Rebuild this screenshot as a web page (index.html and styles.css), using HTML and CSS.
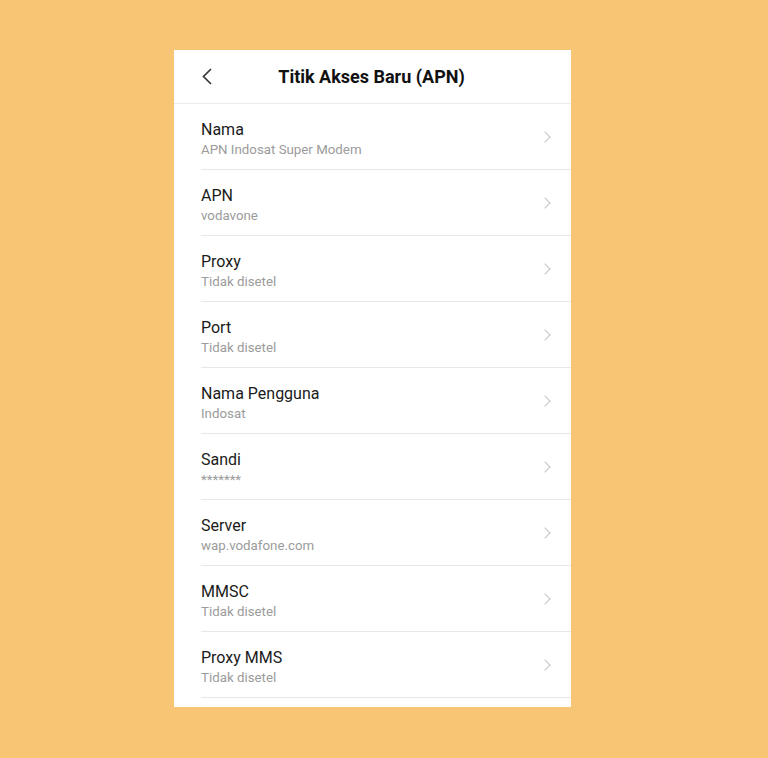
FILE: index.html
```html
<!DOCTYPE html>
<html>
	<head>
		<meta charset="UTF-8">
		<title>Titik Akses Baru (APN)</title>
		<link rel="stylesheet" href="styles.css">
	</head>
	<body>
		<div class="panel">
			<div class="top">
				<a href="javascript:;" class="back">
					<svg width="12" height="17" viewBox="0 0 12 17"><path d="M10 1 L2.5 8.5 L10 16" fill="none" stroke="#333" stroke-width="1.6"/></svg>
				</a>
				<h1>Titik Akses Baru (APN)</h1>
			</div>
			<ul class="list">
				<li><div class="txt"><p class="name">Nama</p><p class="val">APN Indosat Super Modem</p></div><i class="arr"></i></li>
				<li><div class="txt"><p class="name">APN</p><p class="val">vodavone</p></div><i class="arr"></i></li>
				<li><div class="txt"><p class="name">Proxy</p><p class="val">Tidak disetel</p></div><i class="arr"></i></li>
				<li><div class="txt"><p class="name">Port</p><p class="val">Tidak disetel</p></div><i class="arr"></i></li>
				<li><div class="txt"><p class="name">Nama Pengguna</p><p class="val">Indosat</p></div><i class="arr"></i></li>
				<li><div class="txt"><p class="name">Sandi</p><p class="val">*******</p></div><i class="arr"></i></li>
				<li><div class="txt"><p class="name">Server</p><p class="val">wap.vodafone.com</p></div><i class="arr"></i></li>
				<li><div class="txt"><p class="name">MMSC</p><p class="val">Tidak disetel</p></div><i class="arr"></i></li>
				<li><div class="txt"><p class="name">Proxy MMS</p><p class="val">Tidak disetel</p></div><i class="arr"></i></li>
			</ul>
		</div>
	</body>
</html>
```

FILE: styles.css
```css
* {margin:0; padding:0; box-sizing:border-box;}
li {list-style:none;}

body {background:#f8c574; font-family:Roboto, "Noto Sans", Arial, sans-serif; padding-top:50px;}

.panel {width:397px; margin-left:174px; background:#fff; padding-bottom:9px;}

.top {height:54px; border-bottom:1px solid #ebebeb; display:flex; align-items:center; justify-content:center; position:relative;}
.top h1 {font-size:18px; font-weight:bold; color:#111; margin-left:-2px;}
.back {position:absolute; left:27px; top:18px; display:block; width:12px; height:17px;}
.back svg {display:block;}

.list li {height:66px; margin-left:27px; border-bottom:1px solid #e8e8e8; display:flex; align-items:center; padding-right:19px;}
.list .txt {flex:1; padding-top:5px;}
.list .name {font-size:16px; line-height:20px; color:#1b1b1b;}
.list .val {font-size:13.3px; line-height:19px; color:#9b9b9b;}
.arr {width:8px; height:8px; border-top:1.4px solid #c4c4c4; border-right:1.4px solid #c4c4c4; transform:rotate(45deg); margin-right:3px;}
```
